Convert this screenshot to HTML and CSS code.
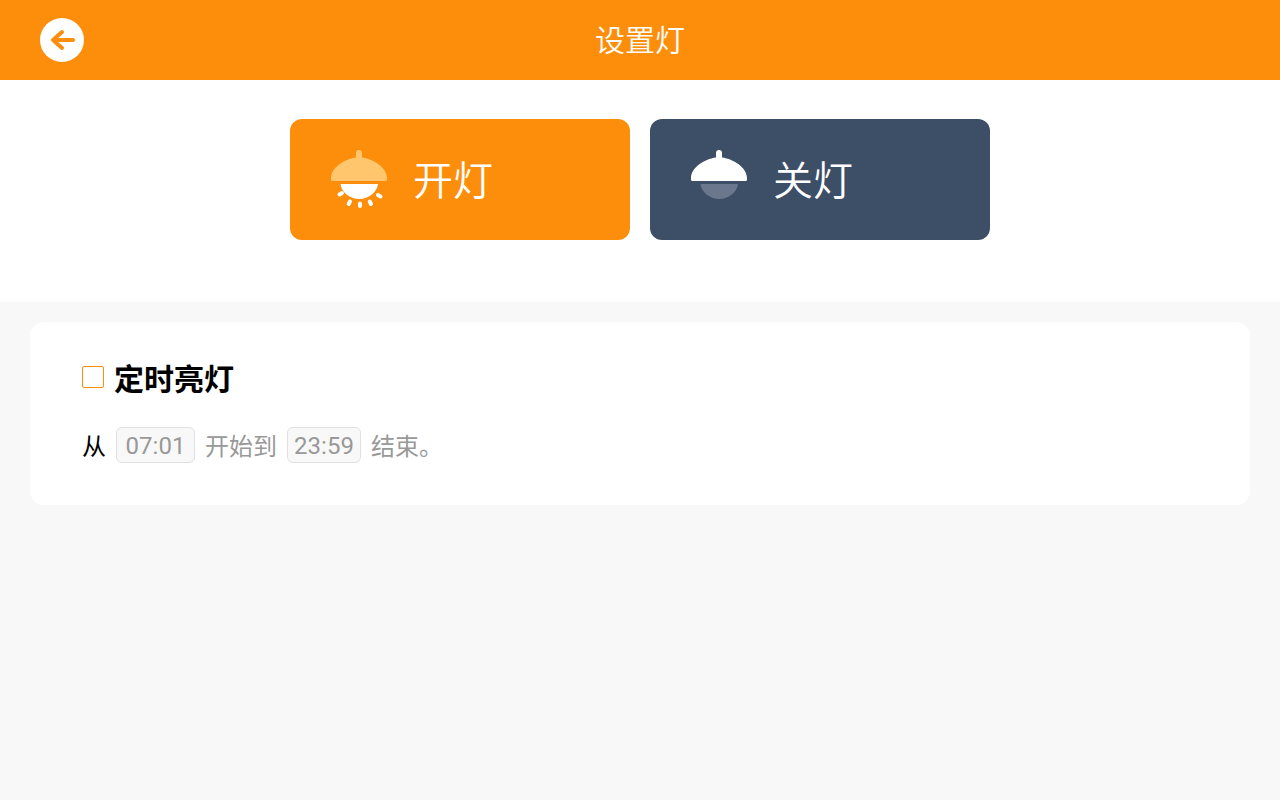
FILE: index.html
```html
<!DOCTYPE html>
<html lang="zh-CN">
<head>
<meta charset="utf-8">
<meta name="viewport" content="width=device-width, initial-scale=1">
<title>设置灯</title>
<link rel="stylesheet" href="styles.css">
</head>
<body>
<header class="topbar">
  <button class="back" type="button" aria-label="返回">
    <svg viewBox="0 0 44 44" aria-hidden="true"><path d="M33 22H14M22 14L13 22L22 30"/></svg>
  </button>
  <h1 class="title">设置灯</h1>
</header>
<main>
  <section class="switches">
    <button class="lamp lamp-on" type="button">
      <svg class="lamp-icon" viewBox="0 0 58 60" aria-hidden="true">
        <path class="shade" d="M26 7.500V3a3 3 0 0 1 6 0v4.500C44 9 57 18 57 28v1.500Q57 31 55.500 31H2.500Q1 31 1 29.500V28C1 18 14 9 26 7.500Z"/>
        <path class="bulb" d="M10.500 34H48C47 42 39 49 29.200 49S11.500 42 10.500 34Z"/>
        <path class="rays" d="M12 43L9.500 44.500M20 51.500L18.700 54M30 53.500V56M39.700 51.500L41 54M48 45L50.500 46.500"/>
      </svg>
      <span>开灯</span>
    </button>
    <button class="lamp lamp-off" type="button">
      <svg class="lamp-icon" viewBox="0 0 58 60" aria-hidden="true">
        <path class="shade" d="M26 7.500V3a3 3 0 0 1 6 0v4.500C44 9 57 18 57 28v1.500Q57 31 55.500 31H2.500Q1 31 1 29.500V28C1 18 14 9 26 7.500Z"/>
        <path class="bulb" d="M10.500 34H48C47 42 39 49 29.200 49S11.500 42 10.500 34Z"/>
      </svg>
      <span>关灯</span>
    </button>
  </section>
  <section class="card">
    <div class="timer">
      <input class="check" type="checkbox" id="timer">
      <label class="timer-label" for="timer">定时亮灯</label>
    </div>
    <div class="range">
      <label class="from" for="start">从</label>
      <input class="time time-start" id="start" type="text" value="07:01" disabled>
      <label for="end">开始到</label>
      <input class="time time-end" id="end" type="text" value="23:59" disabled>
      <span>结束。</span>
    </div>
  </section>
</main>
</body>
</html>
```
FILE: styles.css
```css
* {
  box-sizing: border-box;
}

body {
  margin: 0;
  background: #f8f8f8;
  color: #000;
  font-family: "Noto Sans", "Noto Sans CJK SC", sans-serif;
}

button,
input {
  margin: 0;
  font-family: inherit;
}

.topbar {
  display: grid;
  grid-template-columns: 1fr auto 1fr;
  align-items: center;
  height: 80px;
  padding: 0 40px;
  background: #fc8e0b;
  color: #fff;
}

.back {
  width: 44px;
  height: 44px;
  padding: 0;
  border: 0;
  border-radius: 50%;
  background: #fff;
  cursor: pointer;
}

.back svg {
  display: block;
  fill: none;
  stroke: #fc8e0b;
  stroke-width: 4;
  stroke-linecap: round;
  stroke-linejoin: round;
}

.title {
  margin: 0;
  font-size: 30px;
  font-weight: 350;
  line-height: 40px;
}

.switches {
  display: flex;
  justify-content: center;
  gap: 20px;
  padding: 39px 30px 62px;
  background: #fff;
}

.lamp {
  display: flex;
  align-items: center;
  gap: 25px;
  width: 340px;
  height: 121px;
  padding: 0 40px;
  border: 0;
  border-radius: 12px;
  color: #fff;
  font-size: 40px;
  font-weight: 350;
  line-height: 60px;
  cursor: pointer;
}

.lamp-on {
  background: #fc8e0b;
}

.lamp-off {
  background: #3d4e67;
}

.lamp-icon {
  width: 58px;
  height: 60px;
  fill: #fff;
}

.lamp-on .shade {
  fill: #ffc66e;
}

.lamp-off .bulb {
  fill: #6a778d;
}

.rays {
  fill: none;
  stroke: #fff;
  stroke-width: 4;
  stroke-linecap: round;
}

.card {
  margin: 20px 30px;
  padding: 35px 52px 42px;
  border-radius: 14px;
  background: #fff;
  font-family: "Noto Sans CJK SC", sans-serif;
}

.timer {
  display: flex;
  align-items: center;
  gap: 10px;
  margin-bottom: 30px;
}

.check {
  appearance: none;
  width: 22px;
  height: 22px;
  border: 1px solid #fc8e0b;
  border-radius: 2px;
}

.check:checked {
  background: #fc8e0b;
}

.timer-label {
  font-size: 30px;
  font-weight: 700;
  line-height: 40px;
}

.range {
  display: flex;
  align-items: center;
  gap: 10px;
  color: #999;
  font-size: 24px;
  font-weight: 400;
  line-height: 36px;
}

.from {
  color: #000;
}

.time {
  height: 36px;
  padding: 1px 0 0;
  border: 1px solid #e0e0e0;
  border-radius: 6px;
  background: #f8f8f8;
  color: #999;
  font-family: Roboto, sans-serif;
  font-size: 24px;
  text-align: center;
}

.time-start {
  width: 79px;
}

.time-end {
  width: 74px;
}
```
